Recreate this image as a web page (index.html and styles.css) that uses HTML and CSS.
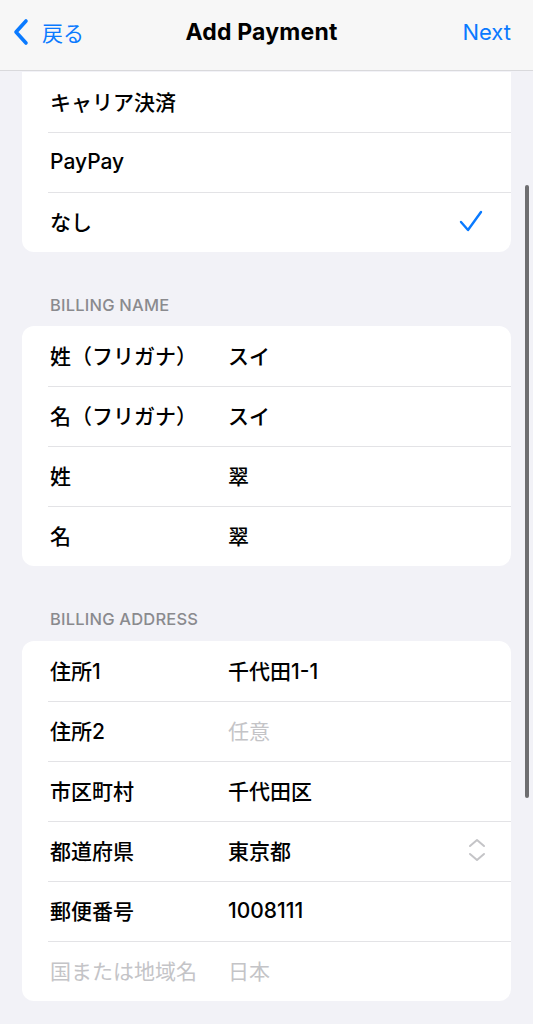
FILE: index.html
```html
<!DOCTYPE html>
<html lang="ja">
<head>
    <meta charset="UTF-8">
    <meta name="viewport" content="width=device-width, initial-scale=1.0">
    <title>Add Payment</title>
    <link rel="stylesheet" href="styles.css">
</head>
<body>
    <header class="nav">
        <a class="nav-back" href="#">
            <svg class="back-icon" width="18" height="28" viewBox="0 0 18 28">
                <path d="M14 3 L4 14 L14 25" fill="none" stroke="#0a7aff" stroke-width="3.6" stroke-linecap="round" stroke-linejoin="round"/>
            </svg>
            <span>戻る</span>
        </a>
        <h1 class="nav-title">Add Payment</h1>
        <a class="nav-next" href="#">Next</a>
    </header>

    <main class="content">
        <section class="card card-top">
            <div class="row"><span class="label">キャリア決済</span></div>
            <div class="row"><span class="label">PayPay</span></div>
            <div class="row">
                <span class="label">なし</span>
                <svg class="check" width="24" height="22" viewBox="0 0 24 22">
                    <path d="M2 12 L9 20 L22 2" fill="none" stroke="#0a7aff" stroke-width="2.4" stroke-linecap="round" stroke-linejoin="round"/>
                </svg>
            </div>
        </section>

        <h2 class="section-title">BILLING NAME</h2>
        <section class="card">
            <div class="row"><span class="label">姓（フリガナ）</span><span class="value">スイ</span></div>
            <div class="row"><span class="label">名（フリガナ）</span><span class="value">スイ</span></div>
            <div class="row"><span class="label">姓</span><span class="value">翠</span></div>
            <div class="row"><span class="label">名</span><span class="value">翠</span></div>
        </section>

        <h2 class="section-title">BILLING ADDRESS</h2>
        <section class="card">
            <div class="row"><span class="label">住所1</span><span class="value">千代田1-1</span></div>
            <div class="row"><span class="label">住所2</span><span class="value placeholder">任意</span></div>
            <div class="row"><span class="label">市区町村</span><span class="value">千代田区</span></div>
            <div class="row">
                <span class="label">都道府県</span><span class="value">東京都</span>
                <svg class="updown" width="20" height="26" viewBox="0 0 20 26">
                    <path d="M3 9 L10 3 L17 9 M3 17 L10 23 L17 17" fill="none" stroke="#c4c4c7" stroke-width="2" stroke-linecap="round" stroke-linejoin="round"/>
                </svg>
            </div>
            <div class="row"><span class="label">郵便番号</span><span class="value">1008111</span></div>
            <div class="row"><span class="label placeholder">国または地域名</span><span class="value placeholder">日本</span></div>
        </section>
    </main>

    <div class="scrollbar"></div>
</body>
</html>
```

FILE: styles.css
```css
body {
    margin: 0;
    background: #f2f2f7;
    font-family: 'Inter', 'Noto Sans CJK JP', sans-serif;
    color: #000;
}

.nav {
    display: flex;
    align-items: center;
    justify-content: space-between;
    height: 71px;
    box-sizing: border-box;
    padding: 0 22px 6px 12px;
    background: #f7f7f7;
    border-bottom: 1px solid #d9d9dc;
}

.nav a {
    color: #0a7aff;
    text-decoration: none;
    font-size: 22px;
}

.nav-back {
    display: flex;
    align-items: center;
    gap: 12px;
    width: 120px;
}

.nav-back span {
    font-size: 21px;
}

.back-icon {
    display: block;
}

.nav-title {
    margin: 0;
    font-size: 23px;
    font-weight: 700;
    letter-spacing: 0.2px;
}

.nav-next {
    width: 120px;
    text-align: right;
}

.content {
    padding: 1px 22px 40px;
}

.card {
    background: #fff;
    border-radius: 12px;
    overflow: hidden;
}

.card-top {
    border-radius: 0 0 12px 12px;
}

.row {
    display: flex;
    align-items: center;
    height: 60px;
    box-sizing: border-box;
    margin-left: 26px;
    padding: 0 28px 3px 2px;
    font-size: 21px;
    font-weight: 500;
}

.row + .row {
    border-top: 1px solid #e3e3e6;
}

.label {
    width: 178px;
    flex-shrink: 0;
    white-space: nowrap;
}

.value {
    flex: 1;
}

.placeholder {
    color: #c4c4c7;
    font-weight: 400;
}

.check {
    margin-left: auto;
}

.updown {
    margin-left: auto;
    margin-right: -4px;
}

.section-title {
    margin: 0;
    padding: 44px 0 11px 28px;
    line-height: 19px;
    font-size: 16.5px;
    font-weight: 500;
    color: #8a8a8e;
    letter-spacing: 0.2px;
}

.card + .section-title + .card + .section-title {
    padding-bottom: 12px;
}

.scrollbar {
    position: fixed;
    top: 185px;
    right: 4px;
    width: 4px;
    height: 613px;
    border-radius: 2px;
    background: #6e6e70;
}
```
